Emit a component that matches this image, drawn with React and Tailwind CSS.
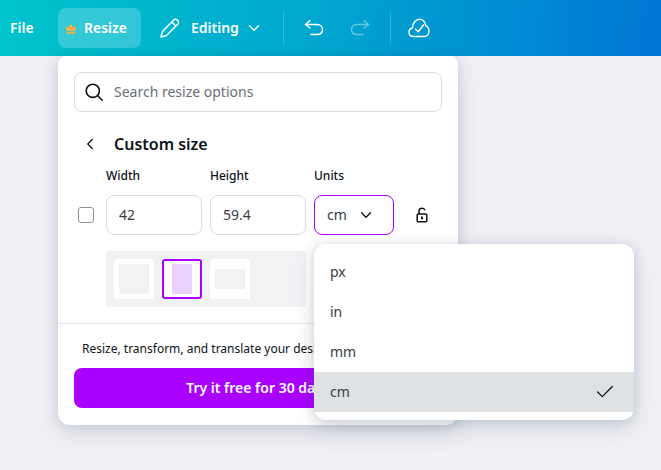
import { ChevronDown, ChevronLeft, Check } from 'lucide-react';

const UNITS = ['px', 'in', 'mm', 'cm'];

const Divider = () => <div className="w-px h-8 bg-white/20" />;

function UnitMenu() {
  return (
    <div className="absolute left-[314px] top-[244px] w-80 py-2 bg-white rounded-xl shadow-[0_2px_12px_rgba(57,76,96,0.2),0_8px_24px_rgba(57,76,96,0.12)]">
      {UNITS.map(u => (
        <div key={u} className={`h-10 pl-4 pr-[18px] flex items-center justify-between text-sm text-[#3a3d42] ${u === 'cm' ? 'bg-[#dfe2e5]' : ''}`}>
          <span>{u}</span>
          {u === 'cm' && <Check size={22} strokeWidth={1.4} className="text-[#0e1318]" />}
        </div>
      ))}
    </div>
  );
}

export default function App() {
  return (
    <div className="relative w-[661px] h-[470px] overflow-hidden bg-[#f0f0f5] font-['Noto_Sans',sans-serif] text-[#0e1318]">
      {/* Top bar */}
      <div className="h-14 flex items-center text-white bg-[linear-gradient(95deg,#00c4cc_0%,#00a5cf_50%,#0076d6_100%)]">
        <span className="ml-[10px] w-12 text-sm font-semibold">File</span>
        <div className="w-[83px] h-10 flex items-center pl-[7px] rounded-lg bg-white/20">
          <svg width="12" height="11" viewBox="0 0 12 11" className="mr-[7px]">
            <path d="M0.5 2.5 L3.2 5 L6 0.8 L8.8 5 L11.5 2.5 L10.3 8 H1.7Z" fill="#f8b040" />
            <rect x="1.8" y="8.8" width="8.4" height="1.8" fill="#f8b040" />
          </svg>
          <span className="text-sm font-semibold">Resize</span>
        </div>
        <svg width="20" height="20" viewBox="0 0 20 20" fill="none" stroke="currentColor" strokeWidth="1.4" strokeLinejoin="round" className="ml-[19px]">
          <path d="M1 19 L2.5 13.5 L13.5 2.2 C14.6 1 16.2 1 17.5 2.2 C18.8 3.4 18.8 5 17.7 6.2 L6.5 17.5Z" />
          <path d="M11.8 4 L16 8.2" />
        </svg>
        <span className="ml-[11px] text-sm font-semibold">Editing</span>
        <ChevronDown size={18} strokeWidth={1.8} className="ml-[6px]" />
        <div className="ml-[20px]"><Divider /></div>
        <svg width="20" height="18" viewBox="0 0 20 18" fill="none" stroke="currentColor" strokeWidth="1.5" strokeLinecap="round" strokeLinejoin="round" className="ml-[20px]">
          <path d="M6 1.5 L1.5 5.5 L6 9" />
          <path d="M1.5 5.5 H13 C16.5 5.5 18.5 7.8 18.5 10.5 C18.5 13.5 16.5 15.5 13 15.5 H7" />
        </svg>
        <svg width="20" height="18" viewBox="0 0 20 18" fill="none" stroke="currentColor" strokeWidth="1.5" strokeLinecap="round" strokeLinejoin="round" className="ml-[26px] opacity-40">
          <path d="M14 1.5 L18.5 5.5 L14 9" />
          <path d="M18.5 5.5 H7 C3.5 5.5 1.5 7.8 1.5 10.5 C1.5 13.5 3.5 15.5 7 15.5 H13" />
        </svg>
        <div className="ml-[20px]"><Divider /></div>
        <svg width="22" height="20" viewBox="0 0 22 20" fill="none" stroke="currentColor" strokeWidth="1.4" strokeLinecap="round" strokeLinejoin="round" className="ml-[17px]">
          <path d="M5.5 18.5 C2.8 18.5 1 16.6 1 14.2 C1 12 2.4 10.4 4.4 10 C4.6 5 7.8 1.2 11.6 1.2 C14.8 1.2 17 3.6 17.6 7.6 C19.8 8.6 21 10.8 21 13.2 C21 16.2 19 18.5 16.2 18.5 Z" />
          <path d="M7.5 11 L10.2 13.8 L15.5 7" />
        </svg>
      </div>

      {/* Resize panel */}
      <div className="ml-[58px] w-[400px] h-[369px] bg-white rounded-b-xl rounded-t-lg p-4 shadow-[0_2px_12px_rgba(57,76,96,0.15),0_8px_24px_rgba(57,76,96,0.12)]">
        <div className="h-10 flex items-center gap-[10px] px-[9px] rounded-lg border border-[#d9dade]">
          <svg width="20" height="20" viewBox="0 0 20 20" fill="none" stroke="currentColor" strokeWidth="1.6" strokeLinecap="round">
            <circle cx="8.8" cy="8.8" r="6.6" />
            <path d="M13.8 13.8 L18.2 18.2" />
          </svg>
          <span className="text-sm text-[#6b6f76]">Search resize options</span>
        </div>

        <div className="mt-5 h-6 flex items-center">
          <ChevronLeft size={18} strokeWidth={1.7} className="ml-[7px]" />
          <span className="ml-[15px] text-base font-semibold">Custom size</span>
        </div>

        <div className="mt-[11px] ml-8 flex text-xs font-medium leading-[18px]">
          <span className="w-[104px]">Width</span>
          <span className="w-[104px]">Height</span>
          <span>Units</span>
        </div>

        <div className="mt-[10px] flex items-center">
          <div className="ml-1 w-4 h-4 rounded-[3px] border border-[#8b8e93]" />
          <div className="ml-3 w-24 h-10 px-3 flex items-center rounded-lg border border-[#d9dade] text-sm text-[#3a3d42]">42</div>
          <div className="ml-2 w-24 h-10 px-3 flex items-center rounded-lg border border-[#d9dade] text-sm text-[#3a3d42]">59.4</div>
          <div className="ml-2 w-20 h-10 pl-3 pr-[18px] flex items-center justify-between rounded-lg border border-[#a900ff] text-sm text-[#3a3d42]">
            cm
            <ChevronDown size={18} strokeWidth={1.8} className="text-[#0e1318]" />
          </div>
          <svg width="14" height="16" viewBox="0 0 14 16" fill="none" stroke="currentColor" strokeWidth="1.5" className="ml-[21px]">
            <rect x="2.2" y="7" width="9.6" height="7.8" rx="1" />
            <path d="M4 7 V4 C4 2.2 5.2 1.2 7 1.2 C8.6 1.2 9.6 2 10 3.2" />
            <rect x="6" y="9.6" width="2" height="2.6" fill="currentColor" stroke="none" />
          </svg>
        </div>

        <div className="mt-4 ml-8 w-[200px] h-14 p-2 flex gap-2 rounded-[3px] bg-[#f1f2f4]">
          <div className="w-10 h-10 flex items-center justify-center rounded-[3px] bg-white">
            <div className="w-[30px] h-[30px] bg-[#f1f2f4]" />
          </div>
          <div className="w-10 h-10 flex items-center justify-center rounded-[3px] bg-white border-2 border-[#a900ff]">
            <div className="w-5 h-[30px] bg-[#ebd0fd]" />
          </div>
          <div className="w-10 h-10 flex items-center justify-center rounded-[3px] bg-white">
            <div className="w-[30px] h-5 bg-[#f1f2f4]" />
          </div>
        </div>

        <div className="-mx-4 mt-4 border-t border-[#e3e5e8]" />

        <p className="mt-4 ml-2 text-xs leading-[18px] whitespace-nowrap">Resize, transform, and translate your designs</p>

        <button className="mt-[10px] w-full h-10 rounded-lg bg-[#a900ff] text-sm font-semibold text-white">Try it free for 30 days</button>
      </div>

      <UnitMenu />
    </div>
  );
}
